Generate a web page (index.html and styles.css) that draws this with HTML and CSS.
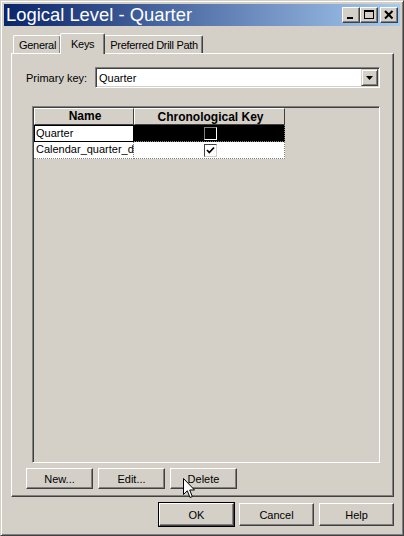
FILE: index.html
```html
<!DOCTYPE html>
<html lang="en">
<head>
    <meta charset="UTF-8">
    <title>Logical Level - Quarter</title>
    <link rel="stylesheet" href="styles.css">
</head>
<body>
    <div class="window">
        <div class="titlebar">
            <span class="title">Logical Level - Quarter</span>
            <div class="title-buttons">
                <button class="tbtn">
                    <svg width="10" height="10" viewBox="0 0 10 10"><rect x="1" y="7" width="6" height="2" fill="#000"/></svg>
                </button>
                <button class="tbtn">
                    <svg width="10" height="10" viewBox="0 0 10 10"><rect x="0.5" y="0.5" width="9" height="8" fill="none" stroke="#000"/><rect x="0" y="0" width="10" height="2" fill="#000"/></svg>
                </button>
                <button class="tbtn close">
                    <svg width="10" height="10" viewBox="0 0 10 10"><path d="M1 1 L8.5 8.5 M8.5 1 L1 8.5" stroke="#000" stroke-width="2"/></svg>
                </button>
            </div>
        </div>

        <div class="dialog">
            <div class="tabs">
                <div class="tab">General</div>
                <div class="tab active">Keys</div>
                <div class="tab">Preferred Drill Path</div>
            </div>

            <div class="panel">
                <div class="key-row">
                    <label class="key-label">Primary key:</label>
                    <div class="combo">
                        <span class="combo-text">Quarter</span>
                        <span class="combo-btn">
                            <svg width="7" height="4" viewBox="0 0 7 4"><path d="M0 0 H7 L3.5 4 Z" fill="#000"/></svg>
                        </span>
                    </div>
                </div>

                <div class="grid">
                    <div class="grid-row head">
                        <div class="cell name">Name</div>
                        <div class="cell chrono">Chronological Key</div>
                    </div>
                    <div class="grid-row selected">
                        <div class="cell name focus">Quarter</div>
                        <div class="cell chrono"><span class="check dark"></span></div>
                    </div>
                    <div class="grid-row">
                        <div class="cell name">Calendar_quarter_d</div>
                        <div class="cell chrono">
                            <span class="check">
                                <svg width="9" height="9" viewBox="0 0 9 9"><path d="M1 4 L3.3 6.5 L8 1.5" fill="none" stroke="#000" stroke-width="1.8"/></svg>
                            </span>
                        </div>
                    </div>
                </div>

                <div class="panel-buttons">
                    <button class="btn small">New...</button>
                    <button class="btn small">Edit...</button>
                    <button class="btn small">Delete</button>
                </div>
            </div>

            <div class="footer">
                <button class="btn default">OK</button>
                <button class="btn">Cancel</button>
                <button class="btn">Help</button>
            </div>
        </div>

        <svg class="cursor" width="13" height="21" viewBox="0 0 13 21">
            <path d="M0.5 0.5 V16.5 L4.3 12.8 L7 19.5 L9.3 18.5 L6.7 12 H11.5 Z" fill="#fff" stroke="#000" stroke-linejoin="miter"/>
        </svg>
    </div>
</body>
</html>
```

FILE: styles.css
```css
html, body {
    margin: 0;
    padding: 0;
}
body {
    font-family: "Liberation Sans", Arial, sans-serif;
    font-size: 11px;
    color: #000;
    background: #d4d0c8;
}
.window {
    position: relative;
    width: 404px;
    height: 536px;
    box-sizing: border-box;
    background: #d4d0c8;
    border: 1px solid;
    border-color: #d4d0c8 #404040 #404040 #d4d0c8;
    box-shadow: inset 1px 1px #fff, inset -1px -1px #808080;
    padding: 3px;
    display: flex;
    flex-direction: column;
}
.titlebar {
    height: 22px;
    display: flex;
    align-items: center;
    justify-content: space-between;
    padding: 0 2px 0 2px;
    background: linear-gradient(to right, #0a246a, #a6caf0);
}
.title {
    color: #fff;
    font-size: 18.4px;
    line-height: 22px;
}
.title-buttons {
    display: flex;
}
.tbtn {
    width: 18px;
    height: 16px;
    padding: 0;
    margin: 0;
    background: #d4d0c8;
    border: 1px solid;
    border-color: #fff #404040 #404040 #fff;
    box-shadow: inset -1px -1px #808080;
    display: flex;
    align-items: center;
    justify-content: center;
}
.tbtn.close {
    margin-left: 2px;
}
.dialog {
    padding: 7px 6px 0 7px;
    display: flex;
    flex-direction: column;
}
.tabs {
    display: flex;
    align-items: flex-end;
    height: 20px;
    padding-left: 2px;
}
.tab {
    height: 18px;
    box-sizing: border-box;
    padding: 3px 4px 0 5px;
    letter-spacing: -0.3px;
    border: 1px solid;
    border-bottom: none;
    border-color: #fff #404040 transparent #fff;
    box-shadow: inset -1px 0 #808080;
    border-radius: 2px 2px 0 0;
}
.tab.active {
    height: 21px;
    margin-bottom: -1px;
    padding: 4px 10px 0 10px;
    background: #d4d0c8;
    position: relative;
    z-index: 1;
    margin-left: -1px;
    margin-right: -1px;
}
.panel {
    width: 383px;
    height: 444px;
    box-sizing: border-box;
    border: 1px solid;
    border-color: #fff #404040 #404040 #fff;
    box-shadow: inset -1px -1px #808080;
    padding: 13px 0 0 14px;
}
.key-row {
    display: flex;
    align-items: center;
}
.key-label {
    width: 69px;
}
.combo {
    width: 285px;
    height: 21px;
    box-sizing: border-box;
    background: #fff;
    border: 1px solid;
    border-color: #808080 #fff #fff #808080;
    box-shadow: inset 1px 1px #404040, inset -1px -1px #d4d0c8;
    display: flex;
    align-items: center;
    justify-content: space-between;
    padding: 0 1px 0 3px;
}
.combo-btn {
    width: 17px;
    height: 17px;
    box-sizing: border-box;
    background: #d4d0c8;
    border: 1px solid;
    border-color: #d4d0c8 #404040 #404040 #d4d0c8;
    box-shadow: inset 1px 1px #fff, inset -1px -1px #808080;
    display: flex;
    align-items: center;
    justify-content: center;
}
.grid {
    width: 348px;
    height: 357px;
    box-sizing: border-box;
    margin: 18px 0 0 6px;
    border: 1px solid;
    border-color: #808080 #fff #fff #808080;
    box-shadow: inset 1px 1px #404040;
    padding: 1px 0 0 1px;
}
.grid-row {
    display: flex;
    height: 17px;
}
.cell {
    box-sizing: border-box;
    height: 100%;
    background: #fff;
    border-right: 1px dotted #808080;
    border-bottom: 1px dotted #808080;
    padding-left: 2px;
    line-height: 15px;
    font-size: 11px;
}
.cell.name {
    width: 100px;
}
.cell.chrono {
    width: 151px;
    display: flex;
    align-items: center;
    justify-content: center;
}
.head .cell {
    background: #d4d0c8;
    font-weight: bold;
    font-size: 12px;
    text-align: center;
    border: 1px solid;
    border-color: #fff #404040 #404040 #fff;
    line-height: 14px;
}
.selected .cell.chrono {
    background: #000;
}
.cell.focus {
    border: 1px solid #000;
    line-height: 14px;
    padding-left: 1px;
}
.check {
    width: 13px;
    height: 13px;
    box-sizing: border-box;
    background: #fff;
    border: 1px solid;
    border-color: #404040 #d4d0c8 #d4d0c8 #404040;
    display: flex;
    align-items: center;
    justify-content: center;
}
.check.dark {
    background: #000;
    border-color: #808080 #fff #fff #808080;
}
.panel-buttons {
    display: flex;
    gap: 5px;
    margin-top: 5px;
}
.btn {
    width: 75px;
    height: 23px;
    box-sizing: border-box;
    padding: 0;
    font-family: "Liberation Sans", Arial, sans-serif;
    font-size: 11px;
    color: #000;
    background: #d4d0c8;
    border: 1px solid;
    border-color: #fff #404040 #404040 #fff;
    box-shadow: inset -1px -1px #808080;
}
.btn.small {
    width: 67px;
    height: 21px;
}
.btn.default {
    outline: 1px solid #000;
    outline-offset: 0;
}
.footer {
    display: flex;
    justify-content: flex-end;
    gap: 5px;
    margin-top: 6px;
}
.cursor {
    position: absolute;
    left: 182px;
    top: 477px;
}
```
